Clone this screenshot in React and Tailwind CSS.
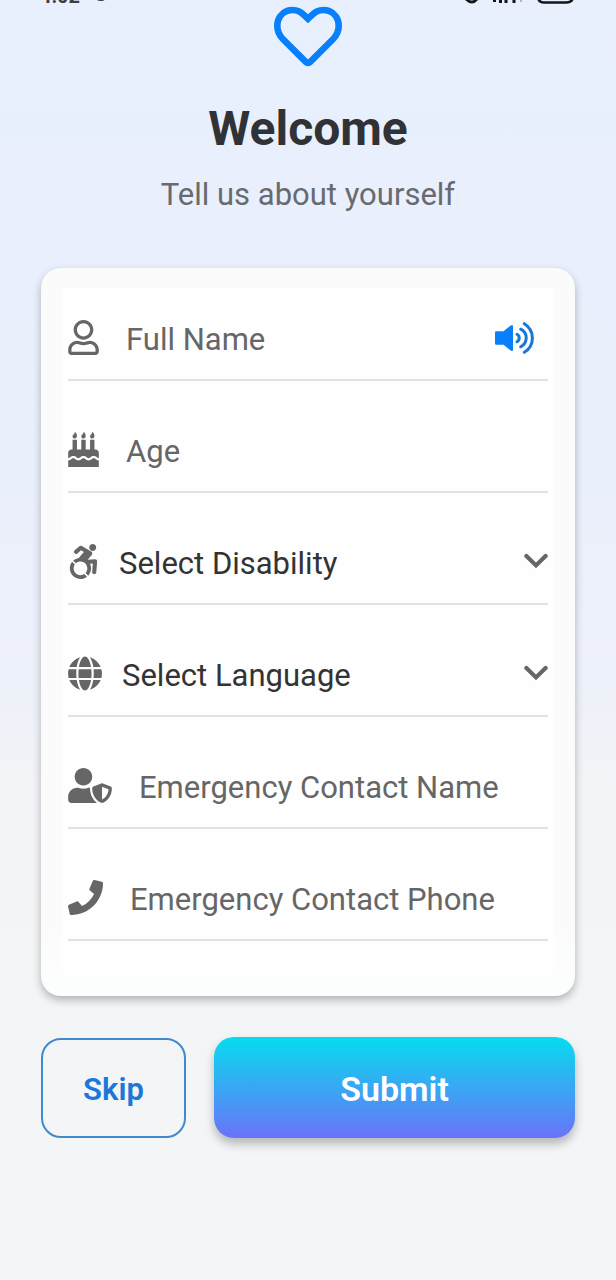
import React from "react";
import {
  FaRegUser,
  FaBirthdayCake,
  FaAccessibleIcon,
  FaGlobe,
  FaUserShield,
  FaPhone,
} from "react-icons/fa";

function StatusBar() {
  return (
    <div className="flex h-1 items-end justify-between overflow-hidden pl-[40px] pr-[41px] text-[#3b3e48]">
      <div className="flex h-6 items-end gap-[14px] text-[20px] leading-6 font-bold">
        <span className="relative top-[4px]">4:02</span>
        <span className="relative top-[3px] text-[18px]">G</span>
      </div>
      <svg className="h-1 w-[110px] shrink-0" viewBox="0 0 110 4" fill="none" stroke="#14161c">
        <path d="M1 -1Q7 5 12 -1" strokeWidth="3" />
        <path d="M29.500 0V2M35.500 0V3M41 0V3M49 0V3" strokeWidth="3" />
        <path d="M56 0V2" stroke="#aeb4c2" strokeWidth="2" />
        <path d="M73 -4Q73 2.500 79 2.500H101Q108 2.500 108 -4" strokeWidth="2.500" />
      </svg>
    </div>
  );
}

function Heart() {
  return (
    <svg className="h-[62px] w-[70px]" viewBox="0 0 70 62" fill="none" stroke="#0880fb" strokeWidth="6.600" strokeLinejoin="miter">
      <path d="M35 13.800L31.200 10.200C21.500 0 4.300 5.500 4.300 21C4.300 26.500 6.300 30.500 10.300 34.500L32.500 56.600Q35 59 37.500 56.600L59.700 34.500C63.700 30.500 65.700 26.500 65.700 21C65.700 5.500 48.500 0 38.800 10.200Z" />
    </svg>
  );
}

function Speaker() {
  return (
    <svg className="mr-[13px] h-[34px] w-10" viewBox="0 0 40 34" fill="none">
      <path d="M1.200 10.200H8.500L15.800 4.400Q18 3 18 5.500V28.500Q18 31 15.800 29.600L8.500 23.800H1.200Q0 23.800 0 22.600V11.400Q0 10.200 1.200 10.200Z" fill="#0880fb" />
      <path d="M22 13.200Q24.200 14.400 24.200 17T22 20.800M25.700 8.200Q31.200 11 31.200 17T25.700 25.800M29.300 2.700Q37.400 7.600 37.400 17T29.300 31.300" stroke="#1678d8" strokeWidth="3" strokeLinecap="round" />
    </svg>
  );
}

function Chevron() {
  return (
    <svg className="relative -top-px h-4 w-6" viewBox="0 0 24 16" fill="none" stroke="#666" strokeWidth="4.200" strokeLinecap="round">
      <path d="M2.400 3L12 12.400L21.600 3" />
    </svg>
  );
}

function Field({ icon, label, labelClass = "", children }) {
  return (
    <div className="flex h-[85px] items-center border-b-2 border-[#e1e1e1] text-[#666]">
      {icon}
      <span className={"flex-1 pt-[5px] text-[31px] leading-10 whitespace-nowrap " + labelClass}>{label}</span>
      {children}
    </div>
  );
}

export default function App() {
  return (
    <main className="h-[1280px] w-full overflow-hidden bg-[linear-gradient(180deg,#e8effd_0%,#ebf0fc_40%,#eef1f9_54%,#f2f4f7_62%,#f4f5f6_100%)] font-['Roboto',sans-serif]">
      <StatusBar />
      <header className="flex flex-col items-center">
        <div className="mt-px"><Heart /></div>
        <h1 className="mt-[34px] text-[48px] leading-[56px] font-bold text-[#303236]">Welcome</h1>
        <p className="mt-[18px] text-[31px] leading-10 text-[#686a6f]">Tell us about yourself</p>
      </header>
      <section className="mx-[41px] mt-[53px] h-[728px] rounded-[20px] bg-[#fbfbfc] bg-linear-to-b from-[#fbfbfc] from-90% to-[#fdfefe] p-5 shadow-[0_4px_9px_rgba(0,0,0,0.27)]">
        <div className="flex h-full flex-col gap-[27px] bg-[#fefefe] px-[7px] pt-2">
          <Field icon={<FaRegUser className="mr-[27px] h-[35px] w-[31px]" />} label="Full Name">
            <Speaker />
          </Field>
          <Field icon={<FaBirthdayCake className="mr-[27px] h-[35px] w-[31px]" />} label="Age" />
          <Field icon={<FaAccessibleIcon className="mr-[20px] h-[35px] w-[31px]" />} label="Select Disability" labelClass="text-[#333]">
            <Chevron />
          </Field>
          <Field icon={<FaGlobe className="mr-[20px] h-[35px] w-[34px]" />} label="Select Language" labelClass="text-[#333]">
            <Chevron />
          </Field>
          <Field icon={<FaUserShield className="mr-[27px] h-[35px] w-[44px]" />} label="Emergency Contact Name" />
          <Field icon={<FaPhone className="mr-[27px] h-[35px] w-[35px]" />} label="Emergency Contact Phone" />
        </div>
      </section>
      <div className="mx-[41px] mt-[41px] flex h-[101px] gap-7">
        <button className="mt-px w-[145px] rounded-[20px] border-2 border-[#3f8acd] pt-1 text-[31px] font-semibold text-[#1b78d8]">Skip</button>
        <button className="flex-1 rounded-[20px] bg-[linear-gradient(180deg,#06dcee,#6a73f9)] pt-1 text-[34px] font-semibold text-white shadow-[0_6px_10px_rgba(0,0,0,0.25)]">Submit</button>
      </div>
    </main>
  );
}
